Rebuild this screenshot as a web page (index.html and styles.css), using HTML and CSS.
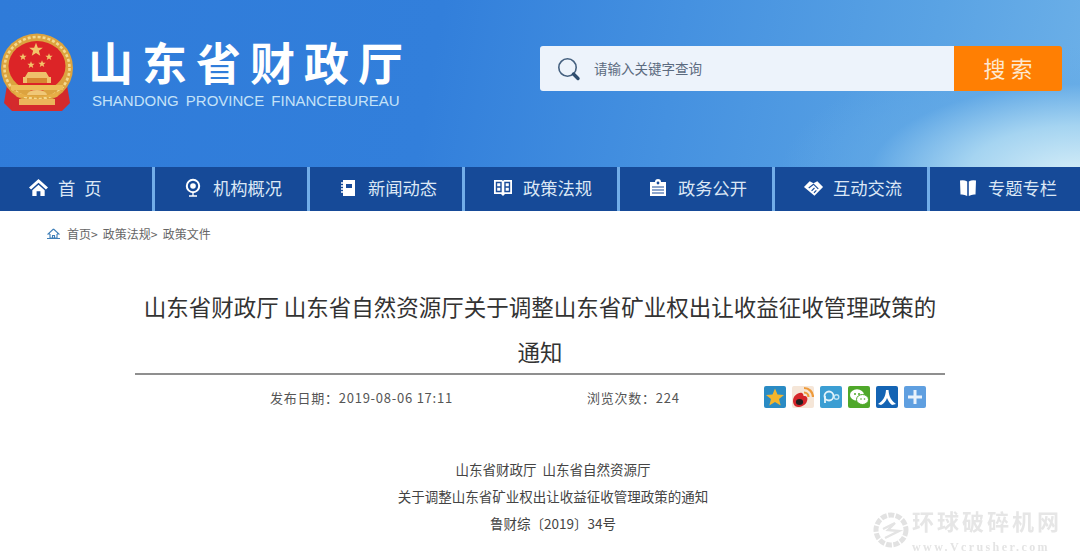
FILE: index.html
```html
<!DOCTYPE html>
<html lang="zh-CN">
<head>
<meta charset="utf-8">
<title>山东省财政厅</title>
<link rel="stylesheet" href="styles.css">
</head>
<body>
<header class="masthead">
  <div class="brand">
    <svg class="emblem" viewBox="0 0 74 80" width="74" height="80" aria-hidden="true">
      <defs>
        <polygon id="star" points="0,-10 2.6,-3.2 9.5,-3.1 4,1.2 5.9,8.1 0,4.2 -5.9,8.1 -4,1.2 -9.5,-3.1 -2.6,-3.2" fill="#f3c56a"/>
      </defs>
      <path d="M7 52 L4 70 L12 78 H62 L70 70 L67 52 Z" fill="#d42a2c"/>
      <ellipse cx="37" cy="35" rx="36" ry="34.5" fill="#dca33f"/>
      <ellipse cx="37" cy="35" rx="32.5" ry="31" fill="none" stroke="#f4d98e" stroke-width="2.6" stroke-dasharray="3 2"/>
      <ellipse cx="37" cy="33" rx="28.5" ry="25" fill="#dc2427"/>
      <use href="#star" transform="translate(36 17) scale(.72)"/>
      <use href="#star" transform="translate(23 24) scale(.38)"/>
      <use href="#star" transform="translate(31 32) scale(.38)"/>
      <use href="#star" transform="translate(42 31) scale(.38)"/>
      <use href="#star" transform="translate(49 24) scale(.38)"/>
      <path d="M28 39 H46 L49 44 H51 V50 H23 V44 H25 Z" fill="#efc06a"/>
      <path d="M27 45 H47 V50 H27 Z" fill="#d8862f"/>
      <path d="M11 52 H63 V57 H11 Z" fill="#edbd58"/>
      <path d="M13 57 Q37 70 61 57 L57 64 H17 Z" fill="#e7ae46"/>
      <path d="M7 59 L12 75 H62 L67 59 L60 66 H14 Z" fill="#d42a2c"/>
      <path d="M19 66 H55 V72 H19 Z" fill="#ecb55a"/>
      <path d="M27 62 A10 5 0 0 1 47 62 Z" fill="#f0c777"/>
    </svg>
    <div class="brand-text">
      <div class="brand-cn">山东省财政厅</div>
      <div class="brand-en">SHANDONG PROVINCE FINANCEBUREAU</div>
    </div>
  </div>
  <form class="search">
    <div class="search-box">
      <svg class="search-icon" viewBox="0 0 24 24" width="24" height="24" aria-hidden="true">
        <circle cx="10.5" cy="10.5" r="8.7" fill="none" stroke="#45607f" stroke-width="1.6"/>
        <path d="M16.5 17 L21 21.5" stroke="#2f4d6e" stroke-width="3.4" stroke-linecap="round"/>
      </svg>
      <span class="search-hint">请输入关键字查询</span>
    </div>
    <div class="search-btn">搜 索</div>
  </form>
</header>

<nav class="nav">
  <a class="nav-item">
    <span class="nav-slot"><svg viewBox="0 0 22 20" width="21" height="19"><path d="M11 1 L1 10 L3.2 12 L11 5 L18.8 12 L21 10 Z M11 7 L4.5 13 V19 H9 V14 H13 V19 H17.5 V13 Z" fill="#fff"/></svg></span>
    <span class="nav-home">首 页</span>
  </a>
  <a class="nav-item">
    <span class="nav-slot"><svg viewBox="0 0 16 20" width="16" height="20"><circle cx="8" cy="8" r="6.2" fill="none" stroke="#fff" stroke-width="2"/><circle cx="8" cy="8" r="2.8" fill="#fff"/><path d="M4 18 H12 M8 15 V18" stroke="#fff" stroke-width="1.3"/></svg></span>
    <span>机构概况</span>
  </a>
  <a class="nav-item">
    <span class="nav-slot"><svg viewBox="0 0 16 18" width="16" height="18"><path d="M3 1 H15 V17 H3 Z" fill="#fff"/><path d="M6 5 H12 V9 H6 Z" fill="#1a4c9a"/><path d="M1 4 H4 M1 7 H4 M1 10 H4 M1 13 H4" stroke="#fff" stroke-width="1.4"/></svg></span>
    <span>新闻动态</span>
  </a>
  <a class="nav-item">
    <span class="nav-slot"><svg viewBox="0 0 20 18" width="20" height="18"><path d="M1 1 H9 L10 2 L11 1 H19 V15 H12 L10 17 L8 15 H1 Z" fill="#fff"/><path d="M3.5 3.5 H8 V12.5 H3.5 Z M12 3.5 H16.5 V12.5 H12 Z M3.5 8 H8 M12 8 H16.5" stroke="#1a4c9a" stroke-width="1.4" fill="none"/></svg></span>
    <span>政策法规</span>
  </a>
  <a class="nav-item">
    <span class="nav-slot"><svg viewBox="0 0 18 18" width="18" height="18"><path d="M1 3 H6 A3 3 0 0 1 12 3 H17 V17 H1 Z" fill="#fff"/><circle cx="9" cy="4" r="1.4" fill="#1a4c9a"/><path d="M3 8 H15 M3 11 H15 M3 14 H15" stroke="#1a4c9a" stroke-width="1.2"/></svg></span>
    <span>政务公开</span>
  </a>
  <a class="nav-item">
    <span class="nav-slot"><svg viewBox="0 0 22 18" width="21" height="18"><path d="M1 8 L7 2 L11 4 L15 2 L21 8 L12 17 Z" fill="#fff"/><path d="M6 9 L11 5 L16 10 M9 12 L12 9 M11.5 14 L14 11.5" stroke="#1a4c9a" stroke-width="1.2" fill="none"/></svg></span>
    <span>互动交流</span>
  </a>
  <a class="nav-item">
    <span class="nav-slot"><svg viewBox="0 0 18 18" width="18" height="18"><path d="M1 1.5 Q5 0.5 8.2 2.5 V17 Q5 15 1.5 15.5 Z M17 1.5 Q13 0.5 9.8 2.5 V17 Q13 15 16.5 15.5 Z" fill="#fff"/></svg></span>
    <span>专题专栏</span>
  </a>
</nav>

<div class="crumbs">
  <svg class="crumb-icon" viewBox="0 0 13 11" width="13" height="11"><path d="M6.5 1 L1 6 H3 M6.5 1 L12 6 H10 M3 6 V10 H10 V6 M5.5 10 V7.5 H7.5 V10" fill="none" stroke="#3f7fb8" stroke-width="1.1"/><path d="M0 10.5 H13" stroke="#3f7fb8"/></svg>
  <span>首页&gt; 政策法规&gt; 政策文件</span>
</div>

<main class="article">
  <h1 class="title">山东省财政厅 山东省自然资源厅关于调整山东省矿业权出让收益征收管理政策的通知</h1>
  <div class="meta">
    <span class="meta-date">发布日期：2019-08-06 17:11</span>
    <span class="meta-views">浏览次数：224</span>
    <div class="share">
      <svg viewBox="0 0 22 22" width="22" height="22"><rect width="22" height="22" rx="2" fill="#2a8bc4"/><polygon points="11,2.5 13.5,8.5 20,9 15,13 16.7,19.5 11,16 5.3,19.5 7,13 2,9 8.5,8.5" fill="#f5b52c"/></svg>
      <svg viewBox="0 0 22 22" width="22" height="22"><rect width="22" height="22" rx="2" fill="#f5e6d8"/><path d="M12 2 A9 9 0 0 1 21 11 M12 6.5 A4.5 4.5 0 0 1 16.5 11" fill="none" stroke="#ee9a3a" stroke-width="2.2"/><path d="M1 15 C1 10 6 6 10 7 C12 8 11 10 12 10 C15 10 16 12 15 15 C14 19 9 21 6 21 C3 21 1 18 1 15 Z" fill="#d5262b"/><ellipse cx="7.5" cy="16" rx="3.6" ry="3" fill="#1f1f1f"/></svg>
      <svg viewBox="0 0 22 22" width="22" height="22"><rect width="22" height="22" rx="2" fill="#3b9ed3"/><circle cx="9" cy="10" r="4.5" fill="none" stroke="#e4f4fb" stroke-width="1.8"/><path d="M5 10 V17" stroke="#e4f4fb" stroke-width="1.8"/><circle cx="16.5" cy="11" r="2.3" fill="none" stroke="#bfe3f3" stroke-width="1.4"/></svg>
      <svg viewBox="0 0 22 22" width="22" height="22"><rect width="22" height="22" rx="2" fill="#4fa82a"/><ellipse cx="9" cy="9" rx="7" ry="5.8" fill="#fff"/><ellipse cx="14.5" cy="13.5" rx="6" ry="5" fill="#fff" stroke="#4fa82a"/><circle cx="7" cy="8" r="1" fill="#4fa82a"/><circle cx="11" cy="8" r="1" fill="#4fa82a"/><circle cx="13" cy="13" r="0.8" fill="#4fa82a"/><circle cx="16.5" cy="13" r="0.8" fill="#4fa82a"/></svg>
      <svg viewBox="0 0 22 22" width="22" height="22"><rect width="22" height="22" rx="2" fill="#1464b4"/><path d="M10 4 H12.5 C13 11 15.5 15 20 18 L16 19 C13.5 17 12 14.5 11 12 C10 15 8 17.5 5 19 L2 18 C7 15 9.5 11 10 4 Z" fill="#fff"/></svg>
      <svg viewBox="0 0 22 22" width="22" height="22"><rect width="22" height="22" rx="2" fill="#5f9fe0"/><path d="M9.5 4 H12.5 V9.5 H18 V12.5 H12.5 V18 H9.5 V12.5 H4 V9.5 H9.5 Z" fill="#e9f2fb"/></svg>
    </div>
  </div>
  <div class="body">
    <p>山东省财政厅&nbsp; 山东省自然资源厅</p>
    <p>关于调整山东省矿业权出让收益征收管理政策的通知</p>
    <p>鲁财综〔2019〕34号</p>
  </div>
</main>

<div class="watermark">
  <svg viewBox="0 0 40 40" width="40" height="40"><circle cx="20" cy="20" r="15" fill="none" stroke="#e2e2e2" stroke-width="5" stroke-dasharray="6 1.5"/><path d="M12 19 L24 13 L17 20 L28 21 L14 28" fill="none" stroke="#e4e4e4" stroke-width="2.4"/></svg>
  <div class="wm-text">
    <div class="wm-cn">环球破碎机网</div>
    <div class="wm-en">www.Vcrusher.com</div>
  </div>
</div>
</body>
</html>
```

FILE: styles.css
```css
* { box-sizing: border-box; }
html, body { margin: 0; padding: 0; }
body {
  width: 1080px;
  height: 558px;
  overflow: hidden;
  position: relative;
  background: #fff;
  color: #333;
  font-family: "Noto Sans CJK SC", "Liberation Sans", sans-serif;
}

.masthead {
  height: 167px;
  display: flex;
  align-items: flex-start;
  justify-content: space-between;
  padding: 33px 18px 0 0;
  background:
    radial-gradient(ellipse 300px 130px at 1080px 175px, #d6eef8 0%, #a5d4f1 38%, rgba(100,170,230,.55) 70%, rgba(70,145,225,0) 100%),
    linear-gradient(100deg, #2f7bd9 0%, #327fdb 40%, #4591e0 62%, #5aa3e4 85%, #6cb0e8 100%);
}
.brand { display: flex; gap: 14px; }
.emblem { flex: none; }
.brand-text { padding-top: 3px; }
.brand-cn {
  color: #fff;
  font-size: 45px;
  font-weight: 700;
  line-height: 52px;
  letter-spacing: 9px;
  white-space: nowrap;
}
.brand-en {
  margin: 5px 0 0 4px;
  color: #c4e2f8;
  font-family: "Liberation Sans", sans-serif;
  font-size: 15px;
  line-height: 16px;
  word-spacing: 3px;
  white-space: nowrap;
}

.search { display: flex; height: 45px; margin-top: 13px; }
.search-box {
  width: 414px;
  display: flex;
  align-items: center;
  gap: 13px;
  padding-left: 17px;
  background: #edf3fb;
  border-radius: 3px 0 0 3px;
}
.search-hint { color: #5c6b80; font-size: 13.5px; line-height: 20px; margin-top: -2px; }
.search-btn {
  width: 108px;
  background: #ff7f03;
  color: #fde8d0;
  border-radius: 0 3px 3px 0;
  font-size: 22px;
  line-height: 43px;
  text-align: center;
}

.nav {
  display: flex;
  gap: 3px;
  height: 44px;
  background: #72ade8;
}
.nav-item {
  flex: 0 0 152px;
  display: flex;
  align-items: center;
  padding: 0 0 3px 27px;
  background: #164a98;
  color: #dbe7f5;
  font-size: 17.3px;
}
.nav-item:last-child { flex: 1; }
.nav-slot {
  flex: none;
  width: 22px;
  margin-right: 9px;
  display: flex;
  justify-content: center;
}
.nav-slot svg { display: block; }
.nav-home { word-spacing: 5px; white-space: pre; }

.crumbs {
  display: flex;
  align-items: center;
  gap: 7px;
  height: 44px;
  margin-bottom: 2px;
  padding-left: 47px;
  color: #666;
  font-size: 12px;
  word-spacing: 2.5px;
}

.article { width: 810px; margin: 0 auto; }
.title {
  margin: 0;
  padding: 27px 0 0;
  height: 118px;
  border-bottom: 2px solid #8f8f8f;
  color: #333;
  font-size: 22.5px;
  font-weight: 400;
  line-height: 45px;
  text-align: center;
}
.meta {
  display: flex;
  align-items: center;
  height: 44px;
  color: #555;
  font-size: 13px;
  letter-spacing: .75px;
  padding-left: 135px;
}
.meta-date { width: 317px; }
.meta-views { width: 177px; }
.share { display: flex; gap: 6px; }
.share svg { display: block; }

.body {
  padding: 37px 0 0 26px;
  color: #444;
  font-size: 13.5px;
  line-height: 27px;
  text-align: center;
}
.body p { margin: 0; }

.watermark {
  position: absolute;
  left: 871px;
  top: 507px;
  display: flex;
  gap: 1px;
  align-items: center;
  filter: blur(.7px);
}
.wm-cn {
  color: #e6e6e6;
  font-size: 22px;
  line-height: 26px;
  letter-spacing: 3px;
  font-weight: 700;
  white-space: nowrap;
}
.wm-en {
  margin-top: 8px;
  color: #e4e4e4;
  font-family: "Liberation Serif", serif;
  font-size: 12px;
  font-weight: 700;
  line-height: 12px;
  letter-spacing: 2.4px;
  white-space: nowrap;
}
```
